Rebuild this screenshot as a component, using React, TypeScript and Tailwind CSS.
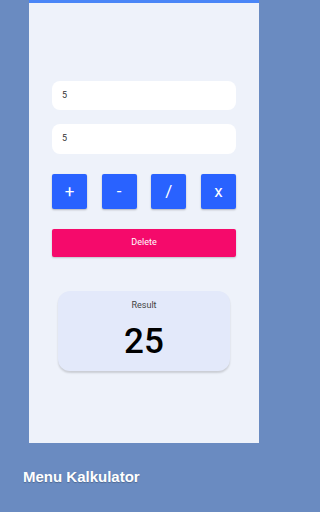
import React from 'react';

const ops = ['+', '-', '/', 'x'];

const App: React.FC = () => {
  return (
    <div className="w-full min-w-[288px] h-[512px] bg-[#6a8bc1] flex flex-col overflow-hidden">
      <div
        className="ml-[29px] w-[230px] h-[443px] bg-[#eef2fa] border-t-[3px] border-[#4a86f7] flex flex-col px-[23px] pt-[78px]"
        style={{ fontFamily: 'Roboto, "Noto Sans", sans-serif' }}
      >
        <div className="h-[29px] rounded-[8px] bg-white flex items-center px-[10px] text-[9px] text-[#333]">5</div>
        <div className="mt-[14px] h-[30px] rounded-[8px] bg-white flex items-center px-[10px] text-[9px] text-[#333]">5</div>

        <div className="mt-[20px] flex justify-between">
          {ops.map((op) => (
            <button
              key={op}
              className="w-[35px] h-[35px] rounded-[2px] bg-[#2962ff] text-white text-[17px] flex items-center justify-center shadow-[0_1px_2px_rgba(0,0,0,0.25)]"
            >
              {op}
            </button>
          ))}
        </div>

        <button className="mt-[20px] h-[28px] rounded-[2px] bg-[#f50a6b] text-white text-[9px] flex items-center justify-center shadow-[0_1px_2px_rgba(0,0,0,0.2)]">
          Delete
        </button>

        <div className="mt-[34px] mx-[6px] h-[80px] rounded-[12px] bg-[#e3e9fa] flex flex-col items-center shadow-[0_2px_2px_rgba(0,0,0,0.15)]">
          <div className="mt-[8px] text-[9px] text-[#444]">Result</div>
          <div className="mt-[11px] text-[35px] font-medium text-black leading-none">25</div>
        </div>
      </div>

      <div
        className="mt-[23px] ml-[23px] text-white text-[15px] font-bold [text-shadow:0_1px_1px_rgba(0,0,0,0.25)]"
        style={{ fontFamily: '"Liberation Sans", Arial, sans-serif' }}
      >
        Menu Kalkulator
      </div>
    </div>
  );
};

export default App;
